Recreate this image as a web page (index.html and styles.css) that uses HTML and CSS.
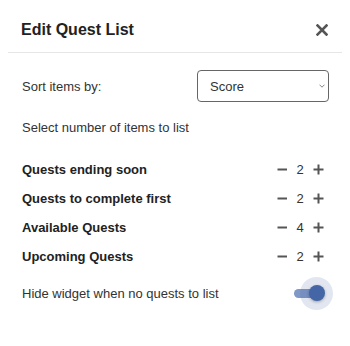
FILE: index.html
```html
<!DOCTYPE html>
<html>
<head>
<meta charset="utf-8">
<link rel="stylesheet" href="styles.css">
</head>
<body>
<div class="card">
  <div class="header">
    <h1 class="title">Edit Quest List</h1>
    <button class="close" aria-label="Close">
      <svg width="12" height="12" viewBox="0 0 12 12"><path d="M1.5 1.5 L10.5 10.5 M10.5 1.5 L1.5 10.5" stroke="#555" stroke-width="2.6" stroke-linecap="square" fill="none"/></svg>
    </button>
  </div>
  <div class="content">
    <div class="sort-row">
      <span class="label">Sort items by:</span>
      <div class="select-wrap">
        <select class="select"><option>Score</option></select>
        <svg class="chev" width="6" height="4" viewBox="0 0 6 4"><path d="M0.5 0.7 L3 3.2 L5.5 0.7" stroke="#777" stroke-width="0.9" fill="none"/></svg>
      </div>
    </div>
    <div class="hint">Select number of items to list</div>
    <div class="counts">
      <div class="count-row">
        <span class="count-label">Quests ending soon</span>
        <div class="stepper">
          <button class="step"><svg width="11" height="11" viewBox="0 0 11 11"><path d="M0.5 5.5 H10" stroke="#555" stroke-width="2" fill="none"/></svg></button>
          <span class="num">2</span>
          <button class="step"><svg width="11" height="11" viewBox="0 0 11 11"><path d="M0.5 5.5 H10.5 M5.5 0.5 V10.5" stroke="#555" stroke-width="2" fill="none"/></svg></button>
        </div>
      </div>
      <div class="count-row">
        <span class="count-label">Quests to complete first</span>
        <div class="stepper">
          <button class="step"><svg width="11" height="11" viewBox="0 0 11 11"><path d="M0.5 5.5 H10" stroke="#555" stroke-width="2" fill="none"/></svg></button>
          <span class="num">2</span>
          <button class="step"><svg width="11" height="11" viewBox="0 0 11 11"><path d="M0.5 5.5 H10.5 M5.5 0.5 V10.5" stroke="#555" stroke-width="2" fill="none"/></svg></button>
        </div>
      </div>
      <div class="count-row">
        <span class="count-label">Available Quests</span>
        <div class="stepper">
          <button class="step"><svg width="11" height="11" viewBox="0 0 11 11"><path d="M0.5 5.5 H10" stroke="#555" stroke-width="2" fill="none"/></svg></button>
          <span class="num">4</span>
          <button class="step"><svg width="11" height="11" viewBox="0 0 11 11"><path d="M0.5 5.5 H10.5 M5.5 0.5 V10.5" stroke="#555" stroke-width="2" fill="none"/></svg></button>
        </div>
      </div>
      <div class="count-row">
        <span class="count-label">Upcoming Quests</span>
        <div class="stepper">
          <button class="step"><svg width="11" height="11" viewBox="0 0 11 11"><path d="M0.5 5.5 H10" stroke="#555" stroke-width="2" fill="none"/></svg></button>
          <span class="num">2</span>
          <button class="step"><svg width="11" height="11" viewBox="0 0 11 11"><path d="M0.5 5.5 H10.5 M5.5 0.5 V10.5" stroke="#555" stroke-width="2" fill="none"/></svg></button>
        </div>
      </div>
    </div>
    <div class="toggle-row">
      <span class="label">Hide widget when no quests to list</span>
      <div class="toggle">
        <div class="track"></div>
        <div class="halo"></div>
        <div class="knob"></div>
      </div>
    </div>
  </div>
</div>
</body>
</html>
```
FILE: styles.css
```css
html, body {
  background: #ffffff;
}
body {
  margin: 7px 8px;
  font-family: "Liberation Sans", Arial, sans-serif;
  color: #222;
}
.card {
  height: 330px;
  background: #fff;
  box-shadow: 0 1px 6px rgba(0, 0, 0, 0.12);
}
.header {
  height: 45px;
  border-bottom: 1px solid #e6e6e6;
  display: flex;
  align-items: center;
  justify-content: space-between;
  padding: 0 14px 0 13px;
}
.title {
  margin: 0;
  font-size: 16px;
  font-weight: bold;
  color: #222;
}
.close {
  border: 0;
  background: none;
  padding: 0;
  width: 12px;
  height: 12px;
  display: flex;
  margin-top: 0;
}
.content {
  padding: 17px 13px 0 14px;
}
.sort-row {
  height: 32px;
  display: flex;
  align-items: center;
  justify-content: space-between;
}
.label {
  font-size: 13px;
  color: #333;
}
.select-wrap {
  position: relative;
  width: 132px;
  height: 32px;
}
.select {
  appearance: none;
  -webkit-appearance: none;
  width: 132px;
  height: 32px;
  border: 1px solid #666;
  border-radius: 4px;
  background: #fff;
  font-family: "Liberation Sans", Arial, sans-serif;
  font-size: 13px;
  color: #333;
  padding: 0 0 0 12px;
  margin: 0;
}
.chev {
  position: absolute;
  right: 4px;
  top: 14px;
}
.hint {
  margin-top: 18px;
  line-height: 16px;
  font-size: 13px;
  color: #333;
}
.counts {
  margin-top: 19px;
}
.count-row {
  height: 29px;
  display: flex;
  align-items: center;
  justify-content: space-between;
}
.count-label {
  font-size: 13px;
  font-weight: bold;
  color: #222;
}
.stepper {
  display: flex;
  align-items: center;
  margin-right: 2px;
}
.step {
  border: 0;
  background: none;
  padding: 0;
  width: 18px;
  height: 18px;
  display: flex;
  align-items: center;
  justify-content: center;
}
.num {
  width: 18px;
  text-align: center;
  font-size: 13px;
  color: #333;
}
.toggle-row {
  margin-top: 8px;
  height: 29px;
  display: flex;
  align-items: center;
  justify-content: space-between;
}
.toggle {
  position: relative;
  width: 31px;
  height: 16px;
  margin-right: 4px;
}
.track {
  position: absolute;
  left: 0;
  top: 3px;
  width: 28px;
  height: 9px;
  border-radius: 5px;
  background: #7f98c6;
}
.halo {
  position: absolute;
  left: -1px;
  top: -9px;
  width: 33px;
  height: 33px;
  margin-left: 7px;
  border-radius: 50%;
  background: rgba(68, 102, 166, 0.16);
}
.knob {
  position: absolute;
  right: 0;
  top: -1px;
  width: 16px;
  height: 16px;
  border-radius: 50%;
  background: #4466a6;
  box-shadow: 0 1px 3px rgba(0, 0, 0, 0.3);
}
```
